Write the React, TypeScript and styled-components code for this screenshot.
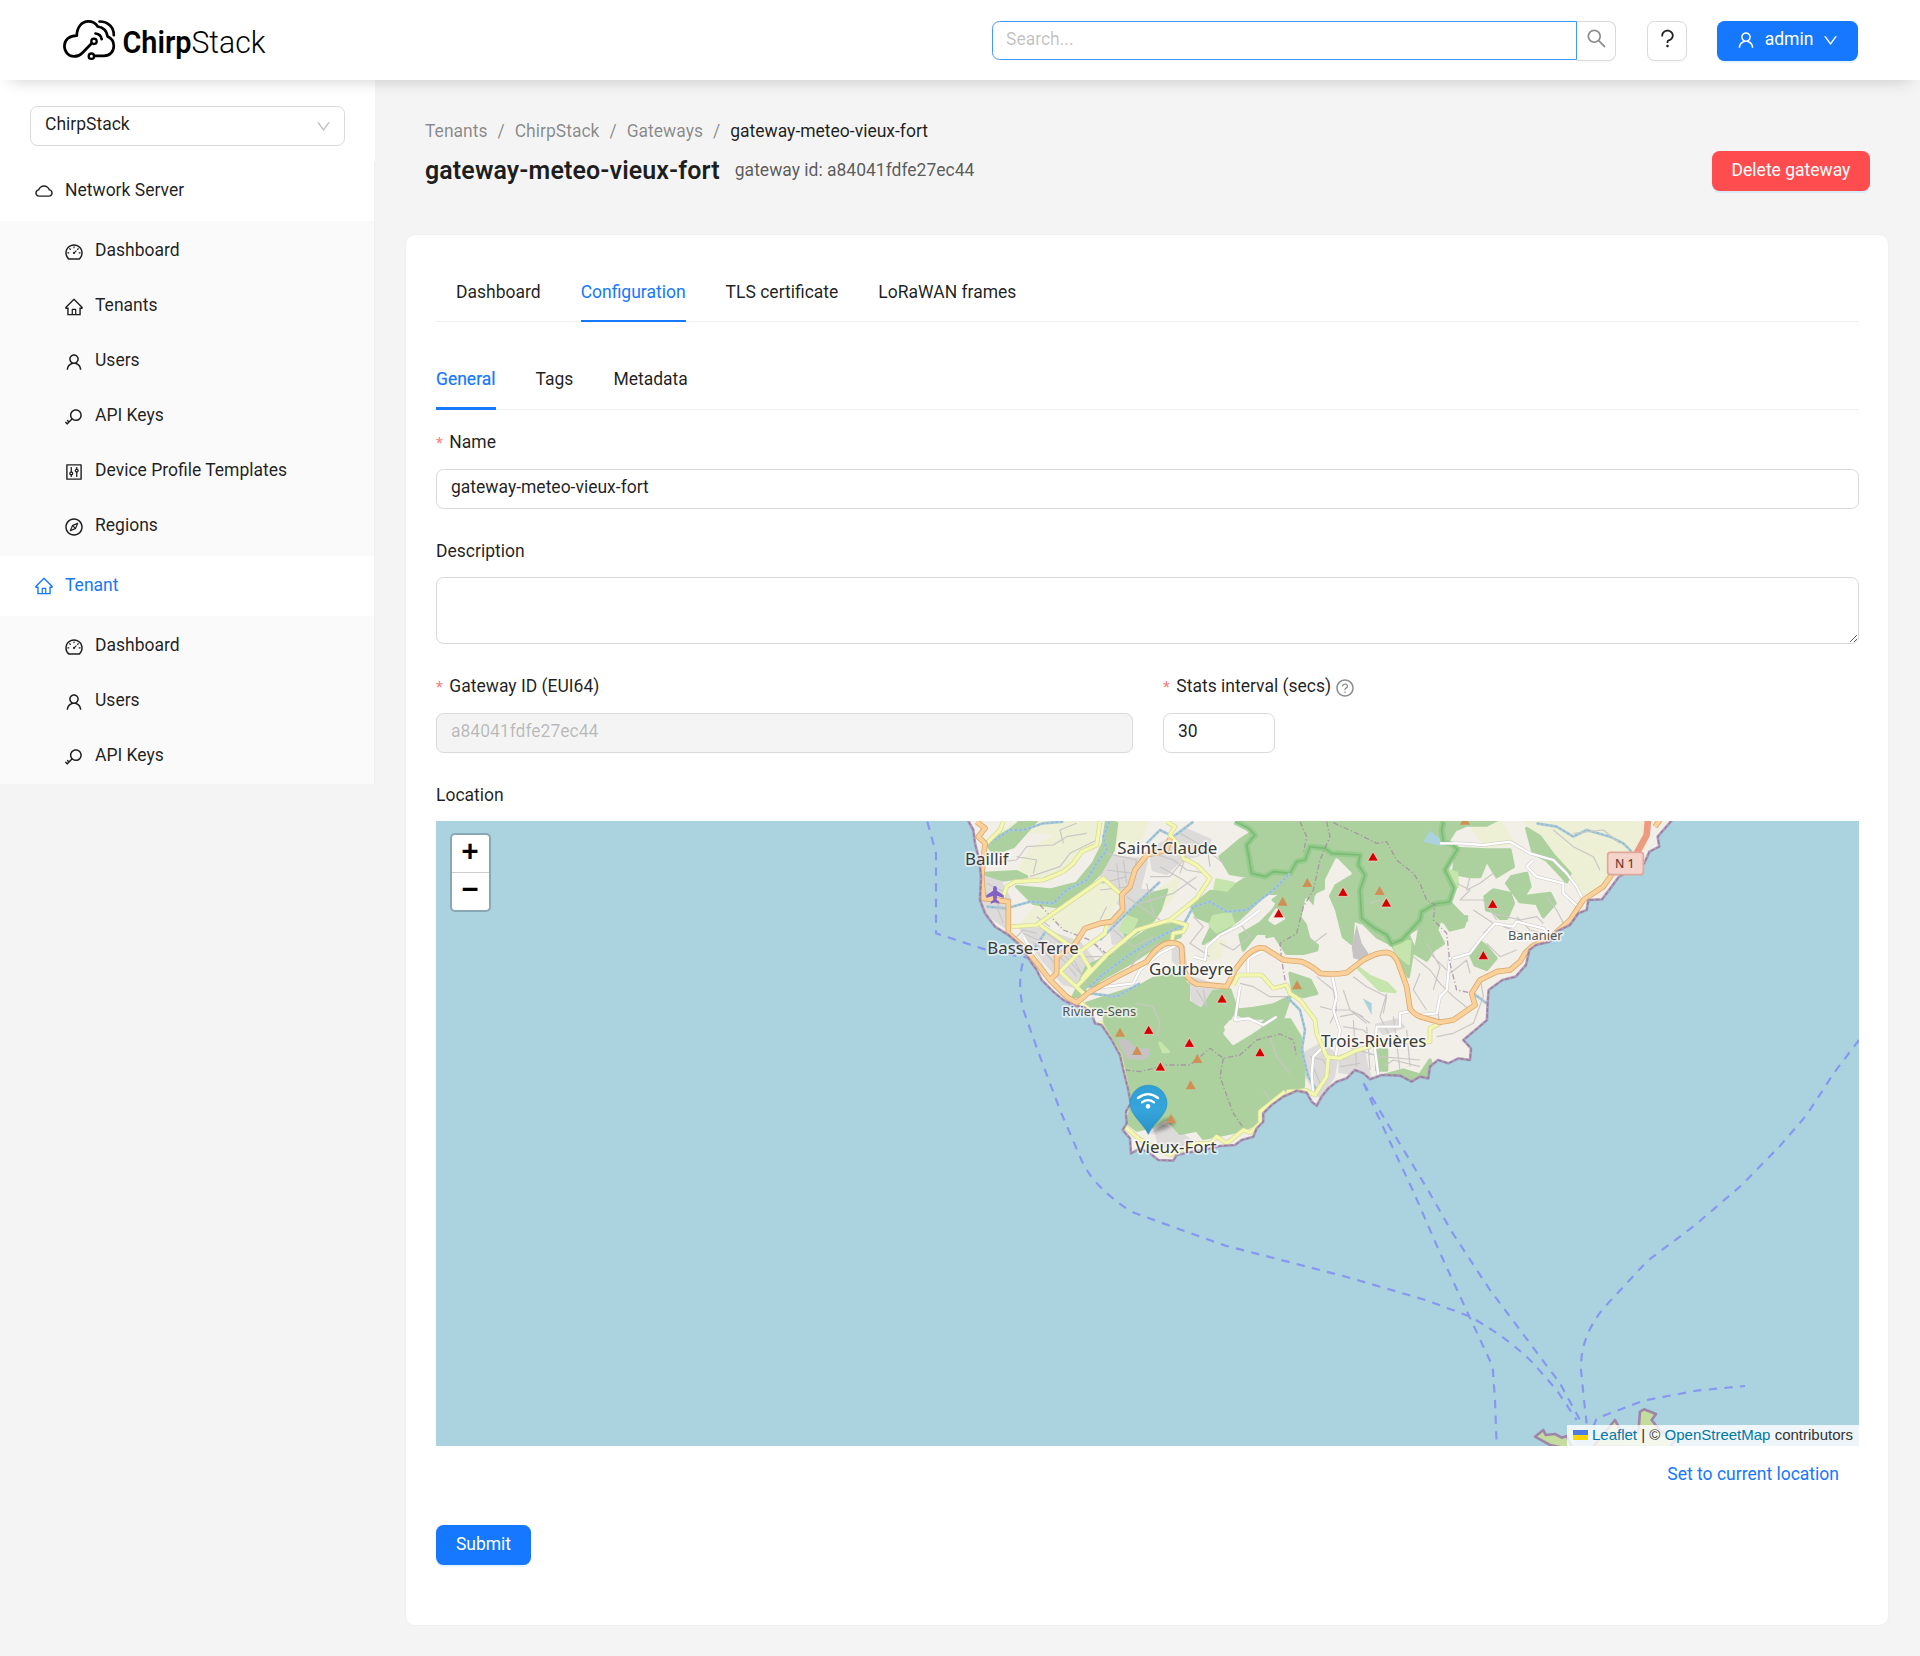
import React from "react";
import styled, { createGlobalStyle, css } from "styled-components";
import {
  AiOutlineCloud,
  AiOutlineDashboard,
  AiOutlineHome,
  AiOutlineUser,
  AiOutlineKey,
  AiOutlineControl,
  AiOutlineCompass,
  AiOutlineSearch,
  AiOutlineDown,
  AiOutlineQuestion,
  AiOutlineQuestionCircle,
} from "react-icons/ai";

const color = {
  primary: "#1677ff",
  danger: "#ff4d4f",
  text: "rgba(0, 0, 0, 0.88)",
  muted: "rgba(0, 0, 0, 0.45)",
  disabled: "rgba(0, 0, 0, 0.25)",
  border: "#d9d9d9",
  split: "#f0f0f0",
  page: "#f4f4f4",
};

const GlobalStyle = createGlobalStyle`
  * { box-sizing: border-box; }
  body {
    margin: 0;
    background: ${color.page};
    color: ${color.text};
    font-family: Roboto, "Liberation Sans", sans-serif;
    font-size: 17.5px;
    line-height: 27.5px;
  }
  input, textarea, button { font: inherit; color: inherit; outline: none; }
`;

const Page = styled.div`
  min-height: 1656px;
  display: flex;
  flex-direction: column;
`;

/* ---------- header ---------- */

const Header = styled.header`
  height: 80px;
  padding: 0 62px 0 62px;
  display: flex;
  align-items: center;
  background: #fff;
  position: relative;
  z-index: 2;
  box-shadow: 0 10px 16px -10px rgba(0, 0, 0, 0.2);
`;

const HeaderActions = styled.div`
  margin-left: auto;
  display: flex;
  align-items: flex-start;
  padding-top: 2px;
`;

const SearchGroup = styled.div`
  display: flex;
  margin-right: 31px;
`;

const SearchInput = styled.input`
  width: 585px;
  height: 39px;
  padding: 0 13px 3px;
  border: 1px solid #4096ff;
  border-radius: 7.5px 0 0 7.5px;
  &::placeholder { color: rgba(0, 0, 0, 0.25); }
`;

const buttonBase = css`
  height: 40px;
  display: flex;
  align-items: center;
  justify-content: center;
  border-radius: 7.5px;
  padding: 0;
`;

const SearchButton = styled.button`
  ${buttonBase}
  width: 39px;
  padding-bottom: 6px;
  border: 1px solid ${color.border};
  border-left: 0;
  border-radius: 0 7.5px 7.5px 0;
  background: #fff;
  color: ${color.muted};
  font-size: 23px;
  box-shadow: 0 2px 0 rgba(0, 0, 0, 0.02);
`;

const HelpButton = styled.button`
  ${buttonBase}
  width: 40px;
  margin-right: 30px;
  padding-bottom: 6px;
  border: 1px solid ${color.border};
  background: #fff;
  font-size: 23px;
  box-shadow: 0 2px 0 rgba(0, 0, 0, 0.02);
`;

const SolidButton = styled.button<{ $tone?: string; $width: number; $drop?: number }>`
  ${buttonBase}
  width: ${(p) => p.$width}px;
  gap: 9px;
  padding-bottom: ${(p) => p.$drop ?? 2}px;
  border: 0;
  background: ${(p) => p.$tone ?? color.primary};
  color: #fff;
  box-shadow: 0 2px 0 rgba(5, 145, 255, 0.1);
`;

function Logo() {
  return (
    <svg width="205" height="44" viewBox="62 18 205 44" fill="none" stroke="#000" strokeLinecap="round" strokeLinejoin="round">
      <g strokeWidth="2.7">
        <path d="M91.500 43.500L82 53.200C79.500 55.800 77.500 56.400 74 56.400C68.500 56.400 64.400 51.600 64.400 46C64.400 40 69.300 35.600 76.800 35.700C76.800 27.500 81.500 21.400 88.300 21.400C92 21.400 95.500 23 97.700 26.500C103 27.300 106.800 31 107.600 36.500C112 38.500 113.800 41.500 113.800 46C113.800 51.500 109.800 55.800 104 55.800H94.500" />
        <circle cx="94" cy="41.300" r="2.700" strokeWidth="2.300" />
        <circle cx="91.400" cy="56.200" r="2.700" strokeWidth="2.300" />
        <path d="M95.500 33.500C99.300 34 101.200 36.200 101.700 39.200" />
        <path d="M99.500 21.500C108 21.500 113.800 27 113.800 35.200" />
      </g>
      <g fill="#000" stroke="none" fontFamily="Roboto, sans-serif" fontSize="31">
        <text x="122.500" y="52.700" fontWeight="600" textLength="69" lengthAdjust="spacingAndGlyphs">Chirp</text>
        <text x="191.500" y="52.700" fontWeight="300" textLength="74" lengthAdjust="spacingAndGlyphs">Stack</text>
      </g>
    </svg>
  );
}

/* ---------- sidebar ---------- */

const Body = styled.div`
  display: flex;
  align-items: flex-start;
`;

const Sidebar = styled.aside`
  width: 375px;
  flex: none;
  background: #fff;
`;

const TenantSelect = styled.div`
  height: 40px;
  margin: 26px 30px 15px;
  padding: 0 12px 2px 14px;
  display: flex;
  align-items: center;
  justify-content: space-between;
  border: 1px solid ${color.border};
  border-radius: 7.5px;
  svg { color: ${color.disabled}; font-size: 17px; position: relative; top: 1px; }
`;

const Menu = styled.nav`
  border-right: 1px solid ${color.split};
`;

const MenuRow = styled.div<{ $nested?: boolean; $active?: boolean }>`
  height: ${(p) => (p.$nested ? 55 : 60)}px;
  padding: 0 0 1px ${(p) => (p.$nested ? 65 : 35)}px;
  display: flex;
  align-items: center;
  gap: 12.500px;
  color: ${(p) => (p.$active ? color.primary : "inherit")};
  svg { font-size: 20px; margin: 0 -1.250px; position: relative; top: 0.5px; }
`;

const SubMenu = styled.div<{ $last?: boolean }>`
  padding: ${(p) => (p.$last ? "3px 0 0" : "3px 0 2px")};
  background: #fafafa;
`;

type Item = [React.ReactNode, string];

const serverItems: Item[] = [
  [<AiOutlineDashboard />, "Dashboard"],
  [<AiOutlineHome />, "Tenants"],
  [<AiOutlineUser />, "Users"],
  [<AiOutlineKey />, "API Keys"],
  [<AiOutlineControl />, "Device Profile Templates"],
  [<AiOutlineCompass />, "Regions"],
];

const tenantItems: Item[] = [
  [<AiOutlineDashboard />, "Dashboard"],
  [<AiOutlineUser />, "Users"],
  [<AiOutlineKey />, "API Keys"],
];

function MenuItems({ items, last }: { items: Item[]; last?: boolean }) {
  return (
    <SubMenu $last={last}>
      {items.map(([icon, label]) => (
        <MenuRow $nested key={label}>
          {icon}
          <span>{label}</span>
        </MenuRow>
      ))}
    </SubMenu>
  );
}

/* ---------- content ---------- */

const Content = styled.main`
  flex: 1;
  min-width: 0;
  padding: 38px 31px 30px;
`;

const PageHead = styled.div`
  padding: 0 19px;
  height: 116px;
`;

const Breadcrumb = styled.div`
  display: flex;
  color: ${color.muted};
  span:last-child { color: ${color.text}; }
`;

const Slash = styled.i`
  font-style: normal;
  margin: 0 10px;
`;

const TitleRow = styled.div`
  margin-top: 5px;
  height: 40px;
  display: flex;
  align-items: center;
  button { margin-left: auto; }
`;

const Title = styled.h1`
  margin: 0 15px 0 0;
  font-size: 25px;
  line-height: 38px;
  font-weight: 600;
  letter-spacing: 0.1px;
`;

const Subtitle = styled.span`
  color: rgba(0, 0, 0, 0.65);
`;

const Card = styled.section`
  height: 1392px;
  margin-left: -1px;
  padding: 30px 29px 30px 30px;
  background: #fff;
  border: 1px solid ${color.split};
  border-radius: 10px;
`;

const Tabs = styled.div<{ $indent?: boolean }>`
  height: 57px;
  display: flex;
  gap: 40px;
  padding-left: ${(p) => (p.$indent ? 20 : 0)}px;
  margin-bottom: ${(p) => (p.$indent ? 31 : 22)}px;
  border-bottom: 1px solid ${color.split};
  > div { padding-top: ${(p) => (p.$indent ? 14 : 13)}px; }
`;

const Tab = styled.div<{ $active?: boolean; $ink?: number; $bold?: boolean }>`
  height: 57px;
  color: ${(p) => (p.$active ? color.primary : "inherit")};
  border-bottom: ${(p) => (p.$active ? `${p.$ink}px solid ${color.primary}` : "0")};
  -webkit-text-stroke: ${(p) => (p.$bold ? "0.2px currentColor" : "0")};
`;

const Field = styled.div<{ $gap?: number }>`
  display: flex;
  flex-direction: column;
  margin-bottom: ${(p) => p.$gap ?? 30}px;
`;

const Label = styled.label<{ $required?: boolean; $gap?: number }>`
  height: 27px;
  margin-bottom: ${(p) => p.$gap ?? 10}px;
  line-height: 24px;
  display: flex;
  align-items: center;
  svg { margin-left: 4px; color: ${color.muted}; font-size: 20px; position: relative; top: -2px; }
  ${(p) =>
    p.$required &&
    css`
      &::before {
        content: "*";
        color: #ff7875;
        margin-right: 6.500px;
        padding-bottom: 4px;
        font-family: "Liberation Sans", sans-serif;
      }
    `}
`;

const LabelText = styled.span<{ $lift?: number }>`
  padding-bottom: ${(p) => p.$lift ?? 6}px;
`;

const TextInput = styled.input<{ $width?: number }>`
  width: ${(p) => (p.$width ? `${p.$width}px` : "100%")};
  height: 40px;
  padding: 0 14px 4px;
  border: 1px solid ${color.border};
  border-radius: 7.5px;
  background: #fff;
  &:disabled { background: #f4f4f4; color: ${color.disabled}; }
`;

const TextArea = styled.textarea`
  display: block;
  width: 100%;
  height: 67px;
  padding: 5px 14px;
  border: 1px solid ${color.border};
  border-radius: 7.5px;
  resize: vertical;
`;

const FieldRow = styled.div`
  display: grid;
  grid-template-columns: 697px 1fr;
  gap: 30px;
`;

const MapFrame = styled.div`
  position: relative;
  height: 625px;
  overflow: hidden;
  background: #aad3df;
  > svg { display: block; }
`;

const ZoomControl = styled.div`
  position: absolute;
  left: 13.5px;
  top: 12px;
  width: 41px;
  border: 2.5px solid rgba(0, 0, 0, 0.2);
  border-radius: 5px;
  background: #fff;
  background-clip: padding-box;
  overflow: hidden;
`;

const ZoomButton = styled.div`
  height: 37px;
  text-align: center;
  font: bold 27.500px/30px "DejaVu Sans Mono", monospace;
  color: #000;
  & + & { border-top: 1px solid #ccc; height: 38px; }
`;

const Attribution = styled.div`
  position: absolute;
  right: 0;
  bottom: 0;
  height: 21px;
  padding: 0 6px 2px;
  display: flex;
  align-items: center;
  gap: 4.200px;
  background: rgba(255, 255, 255, 0.8);
  color: #333;
  font: 15px/19px "Liberation Sans", Arial, sans-serif;
  white-space: nowrap;
`;

const AttributionLink = styled.span`
  color: #0078a8;
`;

const Flag = styled.span`
  width: 15px;
  height: 10px;
  background: linear-gradient(#4c7be1 50%, #ffd500 50%);
`;

const LocationLink = styled.div`
  padding: 15px 20px 0 0;
  height: 79px;
  color: ${color.primary};
  text-align: right;
`;

/* ---------- map drawing ---------- */

const LAND =
  "M138 20L160 60 165 100 178 150 183 200 180 270 195 310 225 350 265 375 300 405 325 445 350 480 365 510 400 545 430 570 465 588 490 590 515 610 525 640 545 645 575 690 600 735 610 780 625 840 632 880 618 905 620 940 608 960 630 985 633 1030 660 1015 690 1030 715 1050 760 1052 770 1035 820 1025 860 1018 900 1008 945 1005 965 990 1000 980 1010 955 1030 935 1030 910 1055 885 1090 860 1130 842 1160 848 1175 875 1190 887 1205 860 1225 835 1250 815 1280 805 1305 780 1330 790 1350 808 1385 795 1440 797 1475 815 1500 800 1525 805 1530 770 1554 750 1585 760 1615 745 1650 750 1653 715 1630 690 1666 660 1701 630 1703 575 1706 540 1747 510 1787 500 1818 465 1828 420 1848 405 1889 395 1909 365 1950 345 1975 310 2000 300 2005 270 2046 268 2071 235 2097 200 2173 160 2188 125 2218 110 2213 80 2265 20Z";

const FARMLAND = [
  "M250 60L330 20 540 20 510 110 450 160 400 200 290 200 330 120 420 70Z",
  "M310 335L350 290 550 215 595 255 570 320 520 330 480 370 440 360 400 330Z",
  "M580 20L690 20 660 90 600 110Z",
  "M1800 20L2190 20 2175 110 2070 190 1985 270 1950 190 1900 140 1870 90Z",
  "M720 240L780 200 760 260 720 300Z",
  "M870 400L915 395 900 440 850 450Z",
  "M1640 30L1740 30 1780 100 1700 110Z",
];

const RESIDENTIAL = [
  "M190 200L240 215 270 270 255 350 200 310 185 270Z",
  "M300 350L370 360 480 400 520 450 500 540 430 520 370 450Z",
  "M570 140L680 150 660 230 640 300 595 280 545 200Z",
  "M690 120L800 60 870 90 850 130 780 150 740 190 700 180Z",
  "M570 330L660 240 720 250 700 320 640 370 580 400Z",
  "M760 400L790 410 800 500 900 530 870 600 820 590 810 510 760 450Z",
  "M1155 730L1210 700 1250 740 1240 800 1200 860 1160 800Z",
  "M1260 740L1330 720 1340 770 1310 790 1260 785Z",
  "M1370 645L1430 630 1450 650 1390 670Z",
  "M1300 780L1340 770 1350 800Z",
  "M700 940L770 960 820 1000 720 1010Z",
  "M1960 25L2040 25 2050 60 1970 50Z",
];

const FOREST = [
  "M500 580L560 560 610 565 640 540 700 505 760 495 805 525 805 575 845 600 880 545 930 540 950 600 905 650 925 690 960 690 1000 660 1040 630 1110 630 1140 680 1152 760 1150 830 1100 838 1050 870 1020 905 1010 940 970 960 900 975 850 985 830 960 780 970 740 925 700 950 650 960 625 940 637 860 615 770 590 735 560 660 550 610Z",
  "M940 20L1750 20 1700 45 1640 45 1605 60 1580 100 1612 118 1575 180 1602 235 1588 276 1640 330 1600 350 1560 330 1550 360 1570 400 1540 420 1520 450 1485 430 1500 350 1463 370 1480 410 1465 500 1430 430 1417 404 1370 380 1330 340 1300 330 1295 400 1270 380 1250 300 1220 230 1180 250 1170 330 1200 350 1190 420 1150 430 1100 430 1060 370 1010 370 970 420 960 375 1020 340 1060 300 1090 250 1040 250 960 325 900 370 850 400 880 340 830 320 815 290 870 245 925 240 985 200 930 190 900 140 960 90 1000 65Z",
  "M500 470L560 440 700 350 790 340 780 380 720 400 630 460 540 510 490 560 460 560Z",
  "M200 100L270 60 320 20 360 20 280 110 220 130Z",
  "M290 230L390 240 470 220 520 160 550 100 560 30 590 40 580 120 540 190 470 260 410 290 340 280Z",
  "M190 190L290 185 320 200 250 210Z",
  "M610 340L650 280 700 250 740 240 720 300 700 330 620 390Z",
  "M1610 115L1700 120 1770 120 1780 170 1730 200 1700 150 1680 200 1650 200 1600 190Z",
  "M1820 55L1860 80 1900 135 1950 190 1940 215 1880 150 1840 130Z",
  "M1775 200L1820 190 1830 230 1810 260 1890 250 1905 280 1870 320 1850 280 1800 275 1760 220Z",
  "M1695 260L1720 240 1770 250 1780 280 1760 325 1740 325 1720 305 1700 300Z",
  "M1650 430L1680 395 1700 410 1728 445 1700 478 1665 465Z",
  "M930 590L960 600 1000 595 1060 585 1110 560 1090 620 1000 625 940 650Z",
  "M1110 490L1170 510 1190 550 1150 560 1120 550Z",
  "M1370 720L1400 720 1400 780 1370 780Z",
  "M1395 795L1450 780 1500 795 1530 750 1540 780 1520 805 1470 815Z",
  "M560 560L700 515 800 495 780 560Z",
  "M1570 330L1640 320 1630 350 1590 360Z",
  "M1060 270L1120 230 1190 240 1160 290 1150 380 1090 370 1040 380 1080 340 1100 300Z",
];

const BRIGHT = [
  "M880 320L930 310 940 340 890 365 870 345Z",
  "M890 210L940 220 920 240 885 235Z",
  "M1420 400L1470 395 1465 460 1430 430Z",
  "M1310 470L1350 500 1400 520 1425 545 1380 540 1340 500Z",
  "M1585 180L1610 190 1612 230 1590 210Z",
  "M720 700L745 725 730 725Z",
  "M620 320L650 330 630 370 600 360Z",
];

const CLEARINGS = [
  "M1220 210L1250 150 1290 190 1240 220 1220 260Z",
  "M1160 270L1185 300 1195 345 1215 360 1200 400 1175 380 1165 340 1150 320Z",
  "M945 620L1020 650 990 670 940 700 915 670Z",
  "M1070 300L1090 325 1065 340 1050 330Z",
];

const PARK_BORDER = [
  "M945 35L985 55 1005 75 980 105 995 190 1035 200 1060 185 1110 190 1130 155 1155 150 1170 110 1215 115 1235 130 1320 135 1315 165 1335 195 1320 240 1325 325 1365 355 1400 375 1415 402 1445 390 1500 330 1505 305 1545 282 1588 276 1602 235 1575 180 1612 118 1600 105 1570 95 1565 60 1570 35",
];

const MINOR = [
  "M200 160L290 150 320 110 400 105 440 80 500 70", "M330 200L420 170 450 130 530 90", "M290 140L350 150 340 190",
  "M430 100L420 60 470 40", "M560 130L650 150 640 190 560 180", "M590 160L600 240", "M610 150L620 220", "M545 220L620 200",
  "M540 240L630 230", "M700 130L760 150 800 180 860 190", "M720 170L790 210 830 240", "M690 200L750 200 790 150", "M620 260L720 330",
  "M660 280L760 250 830 200", "M680 220L700 310", "M780 70L850 110 910 160", "M800 130L780 190", "M860 100L870 170",
  "M310 370L420 420 490 500", "M340 400L430 450 470 500", "M380 370L480 440 550 440", "M370 420L430 490", "M420 390L400 440",
  "M450 430L500 520", "M520 400L560 440", "M580 360L640 410 700 380", "M620 380L580 430", "M820 320L850 350 810 400 870 440",
  "M960 340L990 380 940 420 900 400", "M830 540L860 590 850 540", "M960 520L1000 530 1050 560 1100 560",
  "M1190 500L1240 540 1250 600 1230 640", "M1300 500L1340 530 1400 560 1390 610", "M1200 590L1240 600 1290 600 1340 640", "M1270 540L1290 600 1330 620",
  "M1400 550L1380 620 1410 680", "M1170 740L1210 750 1230 790", "M1180 770L1200 820", "M1270 650L1330 660 1370 700 1480 700", "M1280 710L1380 740 1500 750",
  "M1300 630L1310 770", "M1340 650L1350 780", "M1420 620L1440 780", "M1460 660L1470 770", "M1480 440L1530 480 1560 520 1600 560", "M1500 490L1480 540 1520 600",
  "M1530 430L1590 490 1640 450 1650 490", "M1600 560L1650 600 1670 580", "M1550 590L1560 640", "M1520 400L1560 470 1540 540", "M1610 220L1650 240 1620 270 1690 270 1730 330",
  "M1650 200L1640 240 1680 220 1720 190", "M1720 310L1800 330 1850 320 1870 340", "M1660 300L1720 340 1690 370", "M1790 320L1830 360 1870 370", "M1750 350L1810 370 1850 380",
  "M1700 400L1740 440 1790 420", "M1880 260L1910 300 1930 340", "M1900 60L1960 110 2020 140 2040 180", "M1960 70L2050 60 2100 100", "M1680 500L1690 560 1660 640 1600 670 1550 680",
  "M650 580L700 590 720 640 710 680", "M1050 680L1070 740 1110 790", "M1030 840L1050 870", "M230 290L250 340", "M290 380L310 360 350 370", "M720 400L660 430 620 490", "M1220 370L1180 400", "M1380 270L1350 280",
  "M1260 620L1310 610 1350 640", "M1390 770L1420 750 1500 770", "M560 290L540 330", "M350 320L390 350", "M200 220L260 250", "M200 250L250 300", "M1260 770L1320 760",
];

const WHITE_ROADS = [
  "M820 440L855 450 860 410 900 375 960 345 1020 300", "M500 540L560 530 640 520 660 480 720 430 770 405", "M985 490L985 445 1025 425",
  "M960 530L945 630 985 625 1030 645 1070 620", "M1235 490L1250 560 1240 600 1260 660 1245 750", "M1180 860L1175 790 1180 740 1210 710",
  "M1465 605L1440 610 1440 650 1370 650 1365 720 1375 795", "M1560 100L1620 100 1690 105 1770 95 1830 130 1900 150 1940 190 1970 230 1990 270",
  "M1840 150L1820 170 1850 200 1930 220 1930 250 1985 300", "M1600 445L1650 430 1680 390 1725 340 1780 350 1790 335 1870 355 1890 380",
  "M1590 440L1580 540 1560 560 1550 610 1500 615", "M310 380L390 510",
];

const YELLOW_ROADS = [
  "M250 35L240 60 200 100", "M540 35L530 105 485 125 460 160 430 185 370 210 285 215 260 230 250 260", "M275 350L350 345 550 205 605 255",
  "M740 35L765 50 750 75 780 110 790 145 830 165 870 205 830 265 750 330 650 360 560 435 470 530", "M750 330L800 345 790 365 760 370 755 395",
  "M360 345L440 400 480 425 510 475 485 510", "M560 345L555 370 480 425 420 485 490 550 485 580 510 600", "M955 495L1025 495 1060 535 1100 525 1110 550 1140 570 1185 630 1190 670 1220 740 1260 745 1300 725 1360 705 1420 690",
  "M1225 740L1220 800 1200 830 1185 855 1160 842 1100 845", "M1560 640L1530 655 1530 695 1490 700 1440 690", "M615 950L655 985 700 1010 750 1035 830 1000 870 1000 890 980 920 1000 970 960 990 968 1020 940 1020 905 1095 845",
  "M540 635L600 735 625 850", "M940 525L955 495",
];

const ORANGE_ROADS = [
  "M170 35L195 55 175 80 195 100 190 150 185 200 190 265 265 275 265 370", "M190 265L240 270",
  "M750 85L740 120 680 135 645 180 630 230 605 255 608 300 575 335 540 340 495 355 460 410 410 440 410 490 390 510",
  "M265 370L320 420 390 510 440 560 470 578 510 545 590 500 680 455Q715 402 750 398Q785 400 785 415L788 470Q800 510 830 522L920 530 945 480 960 460Q1000 405 1035 415L1090 450 1145 455Q1180 470 1200 490Q1240 495 1280 488L1330 450Q1370 427 1400 427Q1422 428 1435 460L1460 530 1470 595Q1480 612 1500 620L1560 637 1600 630 1665 585 1655 550 1680 510 1730 485 1770 480 1800 455 1815 430 1835 410 1900 375 1950 330 1990 270 2050 230 2085 180",
  "M2205 50L2220 30",
];

const RIVERS = [
  "M200 290L260 295 330 275 400 280 440 240 500 210 530 160 560 120 550 80 570 30", "M500 540L540 500 620 440 700 390 790 345 820 290 870 275 920 305 980 300 1060 240 1110 190",
  "M1100 560L1140 600 1155 660 1145 720 1165 800 1190 840", "M200 105L270 60 310 60 370 40 430 35", "M510 550L590 560 660 520", "M680 100L720 60 760 80 820 35",
  "M540 390L640 290 720 215", "M1850 40L1910 50 1960 80 2000 60 2070 80 2110 100 2135 125", "M380 360L340 420", "M1660 550L1700 580",
];

const BOUNDARIES = [
  "M1140 35L1160 80 1150 130", "M1220 35L1230 80 1200 150 1180 240 1150 290 1130 370 1080 400 1085 450 1100 540", "M1240 38L1300 65 1370 100 1400 95 1430 150 1480 190 1500 220 1520 270 1545 285 1540 330 1580 370 1590 460 1610 540 1660 550",
  "M360 285L430 360 510 390 570 440", "M615 780L660 785 740 765 810 765 870 715 910 745 960 735 1010 690 1080 672 1120 690 1130 740", "M910 745L900 800 925 870 940 910 975 960",
];

const FERRIES = [
  "M22 35L48 130V370L200 420 320 443",
  "M308 460Q292 520 310 600L360 740 420 900 480 1040Q515 1130 638 1207L913 1306 1281 1401 1520 1471 1648 1519Q1760 1580 1840 1660L1910 1740 1970 1830",
  "M1331 820L1361 890 1412 1000 1478 1140 1556 1320 1648 1519 1718 1670 1725 1770 1730 1905",
  "M1331 820L1372 890 1463 1040 1524 1140 1595 1265 1710 1440 1830 1600 1920 1720 1980 1830",
  "M2817 690L2741 790 2660 915 2578 1010 2462 1128 2328 1243 2181 1354 2052 1493Q1980 1580 1983 1680L1992 1770 2000 1840",
  "M2020 1850L2030 1825 2170 1772 2330 1742 2475 1728",
];

const ISLANDS = [
  "M1845 1880L1870 1860 1877 1875 1905 1872 1925 1883 1940 1878 1960 1920 1890 1905Z",
  "M2020 1910L2060 1860 2085 1830 2105 1868 2155 1868 2160 1805 2172 1798 2208 1812 2195 1830 2220 1862 2265 1890 2250 1912Z",
];

const PEAKS = [
  [1359, 140], [1269, 246], [1399, 278], [1076, 310], [906, 566], [686, 660], [808, 699], [721, 770], [1020, 727], [1718, 282], [1690, 436],
];
const HILLS = [
  [1162, 219], [1379, 243], [1088, 275], [1131, 526], [600, 668], [651, 723], [832, 747], [812, 826], [753, 927], [1635, 32],
];

const PLACES: [string, number, number, number, number][] = [
  ["Saint-Claude", 592, 131, 300, 46],
  ["Baillif", 135, 164, 131, 46],
  ["Basse-Terre", 202, 432, 274, 46],
  ["Gourbeyre", 687, 495, 253, 46],
  ["Riviere-Sens", 427, 618, 222, 36],
  ["Trois-Rivières", 1203, 712, 316, 46],
  ["Vieux-Fort", 646, 1028, 244, 46],
  ["Bananier", 1764, 391, 164, 36],
];

function Lines({ d, stroke, width, dash, opacity }: { d: string[]; stroke: string; width: number; dash?: string; opacity?: number }) {
  return <path d={d.join("")} fill="none" stroke={stroke} strokeWidth={width} strokeDasharray={dash} opacity={opacity} strokeLinejoin="round" />;
}

function Area({ d, fill }: { d: string[]; fill: string }) {
  return <path d={d.join("")} fill={fill} stroke={fill} strokeWidth="10" strokeLinejoin="round" />;
}

function TileMap() {
  return (
    <svg width="1423" height="625" viewBox="-1452 33 4269 1875">
      <defs>
        <clipPath id="land"><path d={LAND} /></clipPath>
        <linearGradient id="pin" x1="0" y1="0" x2="0" y2="1">
          <stop offset="0" stopColor="#2f9fd6" />
          <stop offset="0.5" stopColor="#35a5db" />
          <stop offset="1" stopColor="#2a8fc6" />
        </linearGradient>
        <filter id="soft"><feGaussianBlur stdDeviation="7" /></filter>
      </defs>
      <Lines d={FERRIES} stroke="#8797f0" width={6.5} dash="25 22" />
      <path d={LAND} fill="#f2efe9" />
      <g clipPath="url(#land)">
        <Area d={RESIDENTIAL} fill="#dddbd9" />
        <Area d={FARMLAND} fill="#eef0d5" />
        <Area d={FOREST} fill="#add19e" />
        <Area d={BRIGHT} fill="#c5e5ad" />
        <Area d={CLEARINGS} fill="#f2efe9" />
        <path d="M590 685L625 690 650 715 685 715 690 735 670 750 620 748Z" fill="#c5c3c3" />
        <path d="M1310 345L1325 400 1345 430 1340 455 1300 445 1295 410Z" fill="#c5c3c3" />
        <path d="M1510 95L1530 62 1560 85 1565 108ZM1328 565L1355 580 1355 615Z" fill="#aad3df" />
        <Lines d={PARK_BORDER} stroke="#8cc784" width={18} opacity={0.75} />
        <Lines d={PARK_BORDER} stroke="#6fb56c" width={5} opacity={0.7} />
        <Lines d={RIVERS} stroke="#a5cbd9" width={8} />
        <Lines d={RIVERS} stroke="#8f9fc0" width={4} dash="6 8" opacity={0.6} />
        <Lines d={MINOR} stroke="#c9c6c6" width={3.5} />
        <Lines d={WHITE_ROADS} stroke="#c9c7c7" width={10} />
        <Lines d={WHITE_ROADS} stroke="#ffffff" width={7} />
        <Lines d={BOUNDARIES} stroke="#a28aa0" width={4} dash="16 7 4 7" opacity={0.8} />
        <Lines d={YELLOW_ROADS} stroke="#d3d69a" width={14} />
        <Lines d={YELLOW_ROADS} stroke="#f4f7ae" width={10} />
        <Lines d={ORANGE_ROADS} stroke="#dca96c" width={17} />
        <Lines d={ORANGE_ROADS} stroke="#fad09b" width={12} />
        <Lines d={["M2184 30L2180 75 2150 130"]} stroke="#ed9a83" width={20} />
      </g>
      <path d={LAND} fill="none" stroke="#a68db0" strokeWidth="8" strokeLinejoin="round" opacity="0.8" />
      <path d={LAND} fill="none" stroke="#80608c" strokeWidth="4" strokeDasharray="12 6" opacity="0.5" />
      {ISLANDS.map((d) => (
        <path key={d} d={d} fill="#c5dc9f" stroke="#a085aa" strokeWidth="8" strokeLinejoin="round" />
      ))}
      <path d="M690 970L725 935 750 925 765 938 740 955Z" fill="#000" opacity="0.4" filter="url(#soft)" />
      {HILLS.map(([x, y]) => <path key={`${x}-${y}`} d={`M${x} ${y - 15}l15 27h-30Z`} fill="#d08f55" />)}
      {PEAKS.map(([x, y]) => <path key={`${x}-${y}`} d={`M${x} ${y - 15}l16 28h-32Z`} fill="#d40000" stroke="#f0e6dc" strokeWidth="2" />)}
      <path d="M225 228c5 0 6 6 6 14l20 14v8l-20-7-1 12 8 7v5l-13-4-13 4v-5l8-7-1-12-20 7v-8l20-14c0-8 1-14 6-14Z" fill="#8461c4" />
      <rect x="2063" y="127" width="107" height="67" rx="8" fill="#f4d3cb" stroke="#dfa699" strokeWidth="5" />
      <text x="2085" y="173" textLength="58" lengthAdjust="spacingAndGlyphs" fontFamily="Noto Sans, sans-serif" fontSize="36" fontWeight="500" fill="#7b3b34">N 1</text>
      {PLACES.map(([name, x, y, w, size]) => (
        <text
          key={name}
          x={x}
          y={y}
          textLength={w}
          lengthAdjust="spacingAndGlyphs"
          fontFamily="Noto Sans, sans-serif"
          fontSize={size}
          fill={size > 40 ? "#3a3a3a" : "#555"}
          stroke="#ffffff"
          strokeOpacity="0.6"
          strokeWidth="10"
          strokeLinejoin="round"
          paintOrder="stroke"
        >
          {name}
        </text>
      ))}
      <path d="M685 973C670 940 630 915 630 880a55 54 0 0 1 111 0C741 915 700 940 685 973Z" fill="url(#pin)" stroke="#2b8fc4" strokeWidth="2" />
      <g fill="none" stroke="#fff" strokeWidth="7" strokeLinecap="round">
        <path d="M654 864q30-23 60 0M666 877q18-13 36 0" />
        <circle cx="684" cy="889" r="3.500" fill="#fff" />
      </g>
    </svg>
  );
}

export default function App() {
  return (
    <Page>
      <GlobalStyle />
      <Header>
        <Logo />
        <HeaderActions>
          <SearchGroup>
            <SearchInput placeholder="Search..." />
            <SearchButton><AiOutlineSearch /></SearchButton>
          </SearchGroup>
          <HelpButton><AiOutlineQuestion /></HelpButton>
          <SolidButton $width={141}>
            <AiOutlineUser size={20} />
            <span>admin</span>
            <AiOutlineDown size={17} />
          </SolidButton>
        </HeaderActions>
      </Header>
      <Body>
        <Sidebar>
          <TenantSelect>
            <span>ChirpStack</span>
            <AiOutlineDown />
          </TenantSelect>
          <Menu>
            <MenuRow><AiOutlineCloud /><span>Network Server</span></MenuRow>
            <MenuItems items={serverItems} />
            <MenuRow $active><AiOutlineHome /><span>Tenant</span></MenuRow>
            <MenuItems items={tenantItems} last />
          </Menu>
        </Sidebar>
        <Content>
          <PageHead>
            <Breadcrumb>
              <span>Tenants</span><Slash>/</Slash>
              <span>ChirpStack</span><Slash>/</Slash>
              <span>Gateways</span><Slash>/</Slash>
              <span>gateway-meteo-vieux-fort</span>
            </Breadcrumb>
            <TitleRow>
              <Title>gateway-meteo-vieux-fort</Title>
              <Subtitle>gateway id: a84041fdfe27ec44</Subtitle>
              <SolidButton $width={158} $tone={color.danger} $drop={0}>Delete gateway</SolidButton>
            </TitleRow>
          </PageHead>
          <Card>
            <Tabs $indent>
              <Tab>Dashboard</Tab>
              <Tab $active $ink={2}>Configuration</Tab>
              <Tab>TLS certificate</Tab>
              <Tab>LoRaWAN frames</Tab>
            </Tabs>
            <Tabs>
              <Tab $active $ink={3} $bold>General</Tab>
              <Tab>Tags</Tab>
              <Tab>Metadata</Tab>
            </Tabs>
            <Field $gap={31}>
              <Label $required><LabelText $lift={8}>Name</LabelText></Label>
              <TextInput defaultValue="gateway-meteo-vieux-fort" />
            </Field>
            <Field $gap={32}>
              <Label><LabelText>Description</LabelText></Label>
              <TextArea />
            </Field>
            <FieldRow>
              <Field>
                <Label $required><LabelText $lift={8}>Gateway ID (EUI64)</LabelText></Label>
                <TextInput disabled defaultValue="a84041fdfe27ec44" />
              </Field>
              <Field>
                <Label $required>
                  <LabelText $lift={8}>Stats interval (secs)</LabelText>
                  <AiOutlineQuestionCircle />
                </Label>
                <TextInput $width={112} defaultValue="30" />
              </Field>
            </FieldRow>
            <Field $gap={0}>
              <Label $gap={11}><LabelText $lift={4}>Location</LabelText></Label>
              <MapFrame>
                <TileMap />
                <ZoomControl>
                  <ZoomButton>+</ZoomButton>
                  <ZoomButton>−</ZoomButton>
                </ZoomControl>
                <Attribution>
                  <Flag />
                  <AttributionLink>Leaflet</AttributionLink>
                  <span>|</span>
                  <span>©</span>
                  <AttributionLink>OpenStreetMap</AttributionLink>
                  <span>contributors</span>
                </Attribution>
              </MapFrame>
            </Field>
            <LocationLink>Set to current location</LocationLink>
            <SolidButton $width={95} $drop={0}>Submit</SolidButton>
          </Card>
        </Content>
      </Body>
    </Page>
  );
}
